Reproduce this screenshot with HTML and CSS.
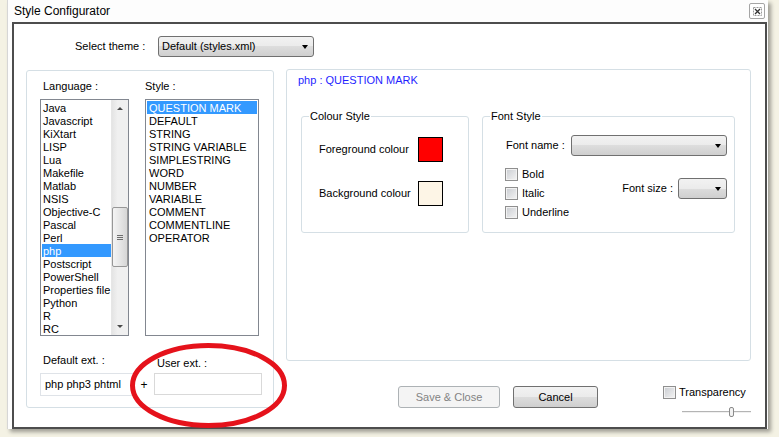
FILE: index.html
```html
<!DOCTYPE html>
<html lang="en">
<head>
    <meta charset="UTF-8">
    <title>Style Configurator</title>
    <link rel="stylesheet" href="styles.css">
</head>
<body>
    <div class="window">
        <div class="titlebar">
            <span class="title">Style Configurator</span>
            <span class="close-btn">
                <svg width="9" height="9" viewBox="0 0 9 9">
                    <rect x="0.5" y="0.5" width="8" height="8" fill="none" stroke="#9a9a9a" stroke-dasharray="2 1"/>
                    <path d="M2 2 L7 7 M7 2 L2 7" stroke="#333" stroke-width="1.3"/>
                </svg>
            </span>
        </div>
        <div class="client">
            <div class="theme-row">
                <span class="theme-label">Select theme :</span>
                <div class="combo theme-combo"><span>Default (styles.xml)</span><i class="arrow"></i></div>
            </div>

            <div class="main">
                <div class="group lang-group">
                    <div class="list-labels">
                        <span class="lbl-lang">Language :</span>
                        <span>Style :</span>
                    </div>
                    <div class="lists">
                        <div class="listbox lang-list">
                            <ul class="items">
                                <li>Java</li>
                                <li>Javascript</li>
                                <li>KiXtart</li>
                                <li>LISP</li>
                                <li>Lua</li>
                                <li>Makefile</li>
                                <li>Matlab</li>
                                <li>NSIS</li>
                                <li>Objective-C</li>
                                <li>Pascal</li>
                                <li>Perl</li>
                                <li class="selected">php</li>
                                <li>Postscript</li>
                                <li>PowerShell</li>
                                <li>Properties file</li>
                                <li>Python</li>
                                <li>R</li>
                                <li>RC</li>
                            </ul>
                            <div class="scrollbar">
                                <div class="sb-btn"><i class="sb-arrow up"></i></div>
                                <div class="sb-track">
                                    <div class="sb-thumb">
                                        <svg width="6" height="7" viewBox="0 0 6 7">
                                            <path d="M0 1.5 H6 M0 3.5 H6 M0 5.5 H6" stroke="#6d6d6d" stroke-width="1"/>
                                        </svg>
                                    </div>
                                </div>
                                <div class="sb-btn"><i class="sb-arrow down"></i></div>
                            </div>
                        </div>
                        <div class="listbox style-list">
                            <ul class="items">
                                <li class="selected">QUESTION MARK</li>
                                <li>DEFAULT</li>
                                <li>STRING</li>
                                <li>STRING VARIABLE</li>
                                <li>SIMPLESTRING</li>
                                <li>WORD</li>
                                <li>NUMBER</li>
                                <li>VARIABLE</li>
                                <li>COMMENT</li>
                                <li>COMMENTLINE</li>
                                <li>OPERATOR</li>
                            </ul>
                        </div>
                    </div>
                    <div class="ext-row">
                        <div class="ext-default">
                            <div class="ext-label">Default ext. :</div>
                            <div class="ext-input default-input">php php3 phtml</div>
                        </div>
                        <div class="plus">+</div>
                        <div class="ext-user">
                            <div class="ext-label">User ext. :</div>
                            <div class="ext-input user-input"></div>
                        </div>
                    </div>
                </div>

                <div class="right-col">
                    <div class="group style-group">
                        <div class="style-title">php : QUESTION MARK</div>
                        <div class="fieldsets">
                            <fieldset class="colour-set">
                                <legend>Colour Style</legend>
                                <div class="colour-grid">
                                    <span>Foreground colour</span>
                                    <span class="swatch fg"></span>
                                    <span>Background colour</span>
                                    <span class="swatch bg"></span>
                                </div>
                            </fieldset>
                            <fieldset class="font-set">
                                <legend>Font Style</legend>
                                <div class="font-name-row">
                                    <span>Font name :</span>
                                    <div class="combo font-combo"><i class="arrow"></i></div>
                                </div>
                                <div class="font-opts">
                                    <div class="checks">
                                        <label class="check"><span class="cb"></span>Bold</label>
                                        <label class="check"><span class="cb"></span>Italic</label>
                                        <label class="check"><span class="cb"></span>Underline</label>
                                    </div>
                                    <div class="font-size">
                                        <span>Font size :</span>
                                        <div class="combo size-combo"><i class="arrow"></i></div>
                                    </div>
                                </div>
                            </fieldset>
                        </div>
                    </div>

                    <div class="footer">
                        <div class="btn btn-save">Save &amp; Close</div>
                        <div class="btn btn-cancel">Cancel</div>
                        <div class="transp">
                            <label class="check transp-row"><span class="cb"></span>Transparency</label>
                            <div class="slider"><span class="slider-thumb"></span></div>
                        </div>
                    </div>
                </div>
            </div>
        </div>
    </div>

    <!-- red hand-drawn circle round the user ext. field -->
    <svg class="annotation" width="165" height="92" viewBox="0 0 165 92">
        <ellipse cx="81.5" cy="46.5" rx="76" ry="40" fill="none" stroke="#e5121b" stroke-width="5"/>
    </svg>
</body>
</html>
```

FILE: styles.css
```css
body {
    margin: 0;
    width: 779px;
    height: 437px;
    overflow: hidden;
    position: relative;
    background-color: #f4f2e4;
    font-family: "Liberation Sans", Arial, sans-serif;
    font-size: 11px;
    line-height: 13px;
    color: #000;
}
.window {
    margin-left: 7px;
    width: 760px;
    height: 429px;
    background-color: #fdfdfd;
    border-left: 1px solid #d6d6d6;
    box-shadow: 3px 3px 4px rgba(0,0,0,0.35);
}
.titlebar {
    height: 22px;
    display: flex;
    align-items: center;
    justify-content: space-between;
    padding: 0 3px 0 6px;
}
.title {
    font-size: 12px;
}
.close-btn {
    width: 14px;
    height: 14px;
    border: 1px solid #a5a5a5;
    border-radius: 2px;
    background-color: #fff;
    display: flex;
    align-items: center;
    justify-content: center;
}
.client {
    margin-left: 4px;
    width: 755px;
    height: 407px;
    box-sizing: border-box;
    border: 2px solid #4d4d4d;
    background-color: #fff;
    padding: 12px 0 0 12px;
}
.theme-row {
    display: flex;
    align-items: center;
    gap: 12px;
    padding-left: 49px;
}
.theme-label {
    width: 71px;
}
.combo {
    box-sizing: border-box;
    height: 21px;
    border: 1px solid #707070;
    border-radius: 3px;
    background: linear-gradient(#f2f2f2, #ebebeb 50%, #dddddd 50%, #cfcfcf);
    display: flex;
    align-items: center;
    padding: 0 5px 0 3px;
}
.combo .arrow {
    margin-left: auto;
    width: 0;
    height: 0;
    border-left: 3.5px solid transparent;
    border-right: 3.5px solid transparent;
    border-top: 4px solid #000;
}
.theme-combo {
    width: 156px;
}
.main {
    display: flex;
    gap: 12px;
    margin-top: 12px;
}
.group {
    box-sizing: border-box;
    border: 1px solid #d5dfe5;
    border-radius: 3px;
}
.lang-group {
    width: 248px;
    height: 338px;
    margin-top: 1px;
    padding: 9px 0 0 13px;
}
.list-labels {
    display: flex;
}
.lbl-lang {
    margin-left: 3px;
    width: 102px;
}
.lists {
    display: flex;
    gap: 16px;
    margin-top: 6px;
}
.listbox {
    box-sizing: border-box;
    height: 237px;
    border: 1px solid #828790;
    display: flex;
    overflow: hidden;
}
.lang-list {
    width: 89px;
}
.style-list {
    width: 114px;
}
.items {
    list-style: none;
    margin: 0;
    padding: 1px;
    flex: 1;
    overflow: hidden;
}
.items li {
    height: 13px;
    line-height: 14px;
    padding-left: 2px;
    white-space: nowrap;
}
.lang-list .items {
    padding: 1px 0 0 1px;
}
.lang-list .items li {
    padding-left: 1px;
}
.items li.selected {
    background-color: #3399ff;
    color: #fff;
}
.scrollbar {
    width: 16px;
    border-left: 1px solid #e6e6e6;
    background: linear-gradient(to right, #e4e4e4, #f0f0f0 35%, #f0f0f0);
    display: flex;
    flex-direction: column;
}
.sb-btn {
    height: 17px;
    display: flex;
    align-items: center;
    justify-content: center;
}
.sb-arrow {
    width: 0;
    height: 0;
    border-left: 3px solid transparent;
    border-right: 3px solid transparent;
}
.sb-arrow.up {
    border-bottom: 3px solid #4a4a4a;
}
.sb-arrow.down {
    border-top: 3px solid #4a4a4a;
}
.sb-track {
    flex: 1;
}
.sb-thumb {
    box-sizing: border-box;
    margin-top: 90px;
    height: 60px;
    border: 1px solid #979797;
    border-radius: 2px;
    background: linear-gradient(to right, #f4f4f4, #e6e6e6 50%, #d6d6d6);
    display: flex;
    align-items: center;
    justify-content: center;
}
.ext-row {
    display: flex;
    align-items: flex-start;
    margin-top: 18px;
}
.ext-label {
    margin-left: 3px;
}
.ext-input {
    box-sizing: border-box;
    border: 1px solid #dfe3e8;
    background-color: #fff;
}
.default-input {
    width: 94px;
    height: 23px;
    margin-top: 6px;
    border-right: none;
    padding: 4px 0 0 4px;
}
.plus {
    width: 20px;
    text-align: center;
    padding-top: 25px;
    font-size: 12px;
}
.ext-user {
    padding-top: 3px;
}
.user-input {
    width: 108px;
    height: 22px;
    margin-top: 3px;
    border-color: #d9d9d9;
}
.right-col {
    width: 465px;
    display: flex;
    flex-direction: column;
}
.style-group {
    height: 292px;
    padding: 4px 13px 0 14px;
}
.style-title {
    margin-left: -3px;
    color: #1f1fff;
}
.fieldsets {
    display: flex;
    gap: 13px;
    margin-top: 23px;
}
fieldset {
    margin: 0;
    min-width: 0;
    box-sizing: border-box;
    height: 123px;
    border: 1px solid #d5dfe5;
    border-radius: 3px;
    padding: 14px 7px 0;
}
legend {
    padding: 0 1px;
}
.colour-set {
    width: 168px;
}
.colour-grid {
    margin-left: 10px;
    display: grid;
    grid-template-columns: 99px 25px;
    grid-auto-rows: 25px;
    row-gap: 19px;
    align-items: center;
}
.swatch {
    box-sizing: border-box;
    width: 25px;
    height: 25px;
    border: 1px solid #000;
}
.swatch.fg {
    background-color: #ff0000;
}
.swatch.bg {
    background-color: #fdf5e6;
}
.font-set {
    width: 253px;
    padding-top: 12px;
}
.font-name-row {
    display: flex;
    align-items: center;
    margin-left: 16px;
}
.font-combo {
    margin-left: auto;
    width: 156px;
}
.font-opts {
    display: flex;
    align-items: flex-start;
    margin-top: 12px;
}
.checks {
    margin-left: 15px;
    display: flex;
    flex-direction: column;
    gap: 6px;
}
.check {
    display: flex;
    align-items: center;
    gap: 4px;
    height: 13px;
}
.cb {
    box-sizing: border-box;
    width: 13px;
    height: 13px;
    border: 1px solid #8f8f8f;
    background: linear-gradient(135deg, #c9ccd1, #f4f4f4);
    box-shadow: inset 0 0 0 1px #f2f2f2;
}
.font-size {
    margin-left: auto;
    margin-top: 10px;
    display: flex;
    align-items: center;
    gap: 5px;
}
.size-combo {
    width: 49px;
}
.footer {
    display: flex;
    align-items: flex-start;
    margin-top: 25px;
    padding-left: 112px;
}
.btn {
    box-sizing: border-box;
    height: 22px;
    border: 1px solid #707070;
    border-radius: 3px;
    background: linear-gradient(#f2f2f2, #ebebeb 50%, #dddddd 50%, #cfcfcf);
    display: flex;
    align-items: center;
    justify-content: center;
}
.btn-save {
    width: 102px;
    border-color: #adb2b5;
    background: #f4f4f4;
    color: #838383;
}
.btn-cancel {
    width: 85px;
    margin-left: 13px;
}
.transp {
    margin-left: auto;
    width: 88px;
}
.transp-row {
    gap: 3px;
}
.slider {
    margin: 8px 0 0 19px;
    width: 69px;
    height: 10px;
    background: linear-gradient(transparent 4px, #b4b4b4 4px, #b4b4b4 5px, #f0f0f0 5px, #f0f0f0 6px, transparent 6px);
}
.slider-thumb {
    display: block;
    box-sizing: border-box;
    margin-left: 47px;
    width: 5px;
    height: 10px;
    border: 1px solid #8a8a8a;
    border-radius: 2px;
    background: #f2f2f2;
}
.annotation {
    position: absolute;
    left: 127px;
    top: 339px;
}
```
